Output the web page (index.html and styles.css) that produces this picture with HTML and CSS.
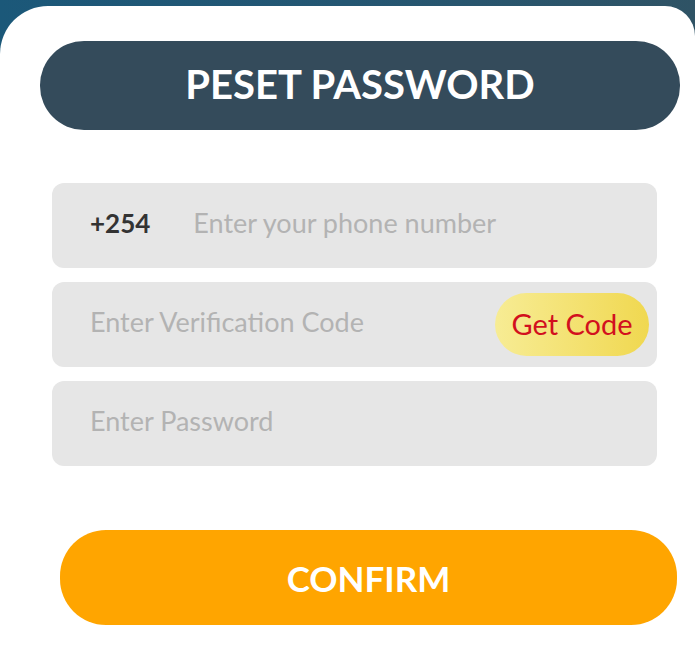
FILE: index.html
```html
<!DOCTYPE html>
<html lang="en">
<head>
    <meta charset="UTF-8">
    <meta name="viewport" content="width=device-width, initial-scale=1.0">
    <title>Reset Password</title>
    <link rel="stylesheet" href="styles.css">
</head>
<body>
    <div class="sheet">
        <div class="title-bar">
            <h1>PESET PASSWORD</h1>
        </div>

        <form class="reset-form" onsubmit="return false;">
            <div class="field">
                <span class="prefix">+254</span>
                <input type="text" placeholder="Enter your phone number">
            </div>
            <div class="field">
                <input type="text" placeholder="Enter Verification Code">
                <button type="button" class="code-btn">Get Code</button>
            </div>
            <div class="field">
                <input type="password" placeholder="Enter Password">
            </div>

            <button type="submit" class="confirm-btn">CONFIRM</button>
        </form>
    </div>
</body>
</html>
```

FILE: styles.css
```css
body {
    margin: 0;
    font-family: Lato, "Open Sans", sans-serif;
    background: linear-gradient(90deg, #1b5879 0%, #245672 50%, #2f5365 100%);
    height: 646px;
    overflow: hidden;
}
.sheet {
    margin-top: 6px;
    height: 640px;
    background: #fff;
    border-radius: 48px 30px 0 0;
    padding-top: 35px;
    box-sizing: border-box;
}
.title-bar {
    margin: 0 15px 0 40px;
    height: 89px;
    background-color: #344b5b;
    border-radius: 44px;
    display: flex;
    align-items: center;
    justify-content: center;
}
.title-bar h1 {
    margin: 0 0 4px 0;
    color: #fff;
    font-size: 40px;
    font-weight: bold;
}
.reset-form {
    display: flex;
    flex-direction: column;
    gap: 14px;
    margin-top: 53px;
    padding-left: 52px;
    width: 605px;
}
.field {
    height: 85px;
    box-sizing: border-box;
    background-color: #e6e6e6;
    border-radius: 12px;
    display: flex;
    align-items: center;
    padding: 0 8px 6px 38px;
}
.prefix {
    color: #333;
    font-size: 26px;
    font-weight: bold;
    margin-right: 43px;
}
.field input {
    flex: 1;
    min-width: 0;
    border: none;
    background: transparent;
    outline: none;
    font-family: inherit;
    font-size: 27px;
    color: #333;
    padding: 0;
}
.field input::placeholder {
    color: #b3b3b3;
}
.code-btn {
    height: 63px;
    width: 154px;
    margin-top: 6px;
    padding: 0 0 3px 0;
    border: none;
    border-radius: 32px;
    background: linear-gradient(90deg, #f7ec94 0%, #f3e06c 60%, #f0d850 100%);
    color: #d2101e;
    font-family: inherit;
    font-size: 29px;
    cursor: pointer;
}
.confirm-btn {
    margin: 50px 0 0 8px;
    width: 617px;
    height: 95px;
    border: none;
    border-radius: 46px;
    background-color: #ffa500;
    color: #fff;
    font-family: inherit;
    font-size: 35px;
    font-weight: bold;
    cursor: pointer;
}
```
